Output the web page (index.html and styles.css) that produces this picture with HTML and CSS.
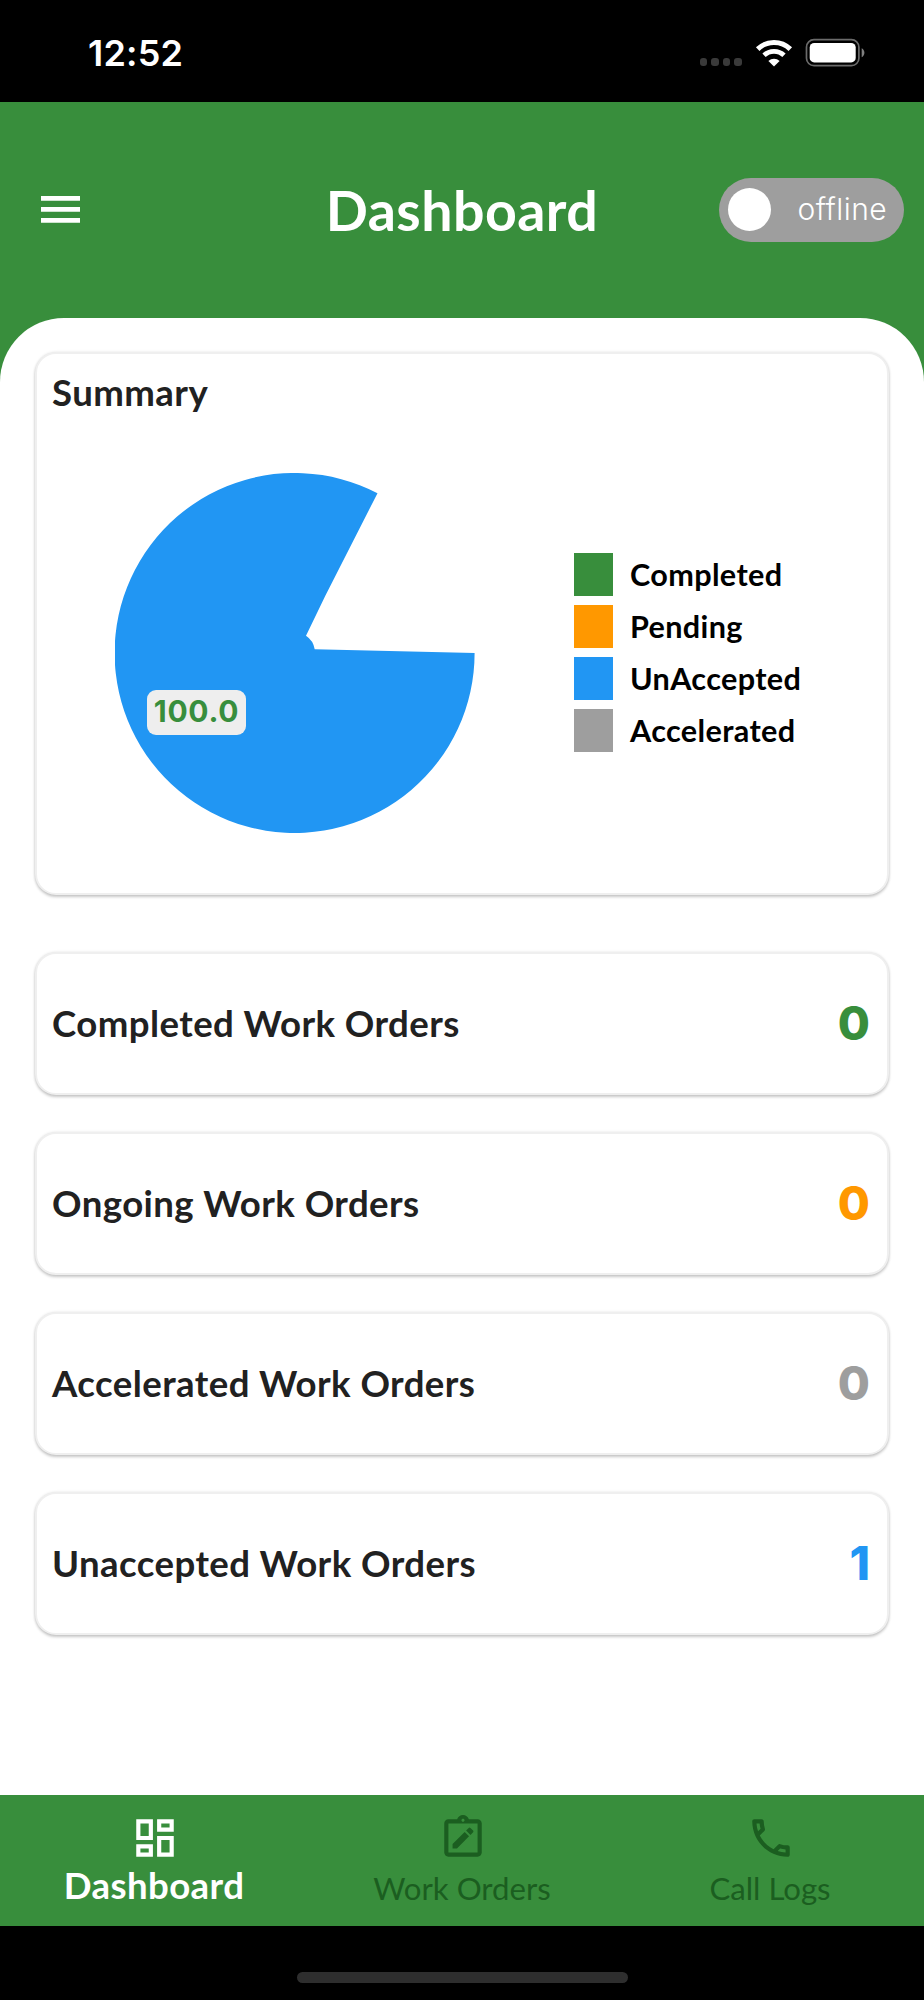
FILE: index.html
```html
<!DOCTYPE html>
<html lang="en">
<head>
<meta charset="utf-8">
<title>Dashboard</title>
<link rel="stylesheet" href="styles.css">
</head>
<body>
<div class="screen">
  <div class="status">
    <span class="clock">12:52</span>
    <div class="status-icons">
      <div class="dots"><i></i><i></i><i></i><i></i></div>
      <svg class="wifi" width="38" height="30" viewBox="0 0 38 30">
        <g fill="none" stroke="#fff" stroke-width="5">
          <path d="M2.7 11.1a23.3 23.3 0 0 1 32.6 0"/>
          <path d="M9 17.3a14.5 14.5 0 0 1 20 0" stroke-width="4.8"/>
        </g>
        <path d="M19 28.6l-5.600-5.600a8.200 8.200 0 0 1 11.200 0z" fill="#fff"/>
      </svg>
      <svg class="battery" width="60" height="30" viewBox="0 0 60 30">
        <rect x="1.5" y="1.7" width="52.4" height="26" rx="7.5" fill="none" stroke="#6b6b6b" stroke-width="1.7"/>
        <rect x="4.7" y="5" width="46" height="19.4" rx="4.5" fill="#fff"/>
        <path d="M56.7 10.2c3.600 1.700 3.600 7.300 0 9z" fill="#808080"/>
      </svg>
    </div>
  </div>

  <header class="header">
    <svg class="menu" width="39" height="27" viewBox="0 0 39 27"><path fill="#fff" d="M0 0h39v4.700H0zM0 11h39v4.700H0zM0 22h39v4.700H0z"/></svg>
    <h1 class="title">Dashboard</h1>
    <div class="toggle"><span class="knob"></span><span class="toggle-text">offline</span></div>
  </header>

  <main class="sheet">
    <section class="card summary">
      <h2 class="label">Summary</h2>
      <div class="chart-row">
        <div class="pie">
          <svg width="360" height="360" viewBox="0 0 360 360">
            <path fill="#2196f3" d="M262.500 20.200A180 180 0 1 0 359.600 180L199.700 176.300A20 20 0 0 0 191 162.700L210.200 123Z"/>
          </svg>
          <span class="badge">100.0</span>
        </div>
        <ul class="legend">
          <li><span class="swatch green"></span>Completed</li>
          <li><span class="swatch orange"></span>Pending</li>
          <li><span class="swatch blue"></span>UnAccepted</li>
          <li><span class="swatch grey"></span>Accelerated</li>
        </ul>
      </div>
    </section>
    <section class="card stat"><h2 class="label">Completed Work Orders</h2><span class="count c-green">0</span></section>
    <section class="card stat"><h2 class="label">Ongoing Work Orders</h2><span class="count c-orange">0</span></section>
    <section class="card stat"><h2 class="label">Accelerated Work Orders</h2><span class="count c-grey">0</span></section>
    <section class="card stat"><h2 class="label">Unaccepted Work Orders</h2><span class="count c-blue">1</span></section>
  </main>

  <nav class="tabs">
    <div class="tab active">
      <svg width="50" height="50" viewBox="0 0 24 24" fill="currentColor"><path d="M19 5v2h-4V5h4M9 5v6H5V5h4m10 8v6h-4v-6h4M9 17v2H5v-2h4M21 3h-8v6h8V3zM11 3H3v10h8V3zm10 8h-8v10h8V11zm-10 4H3v6h8v-6z"/></svg>
      <span>Dashboard</span>
    </div>
    <div class="tab">
      <svg width="50" height="50" viewBox="0 0 24 24" fill="currentColor"><path fill-rule="evenodd" d="M19 3h-4.180C14.400 1.840 13.300 1 12 1s-2.400.84-2.820 2H5c-1.100 0-2 .9-2 2v14c0 1.100.9 2 2 2h14c1.100 0 2-.9 2-2V5c0-1.100-.9-2-2-2zm-7-.25c.41 0 .75.34.75.75s-.34.75-.75.75-.75-.34-.75-.75.34-.75.75-.75zM19 19H5V5h14v14z"/><path d="M7 14.900V17h2.100l5.800-5.800-2.100-2.100zM15.600 10.500l1.250-1.250a.6.6 0 0 0 0-.8L15.550 7.150a.6.6 0 0 0-.8 0L13.500 8.400z"/></svg>
      <span>Work Orders</span>
    </div>
    <div class="tab">
      <svg width="50" height="50" viewBox="0 0 24 24" fill="currentColor"><path d="M6.540 5c.06.89.21 1.760.45 2.590l-1.200 1.200c-.41-1.200-.67-2.470-.76-3.790h1.510m9.860 12.020c.85.24 1.720.39 2.600.45v1.490c-1.320-.09-2.590-.35-3.800-.75l1.200-1.190M7.500 3H4c-.55 0-1 .45-1 1 0 9.390 7.610 17 17 17 .55 0 1-.45 1-1v-3.490c0-.55-.45-1-1-1-1.240 0-2.450-.2-3.570-.57-.1-.04-.21-.05-.31-.05-.26 0-.51.1-.71.29l-2.200 2.200c-2.830-1.450-5.150-3.760-6.590-6.590l2.200-2.200c.28-.28.36-.67.25-1.020C8.700 6.450 8.500 5.250 8.500 4c0-.55-.45-1-1-1z"/></svg>
      <span>Call Logs</span>
    </div>
  </nav>
  <footer class="home"><span class="home-bar"></span></footer>
</div>
</body>
</html>
```
FILE: styles.css
```css
* { box-sizing: border-box; margin: 0; padding: 0; }
body { background: #000; font-family: Lato, "Liberation Sans", sans-serif; }
.screen { width: 924px; height: 2000px; display: flex; flex-direction: column; background: #388e3c; overflow: hidden; }

.status { height: 101.500px; flex: none; background: #000; display: flex; align-items: center; justify-content: space-between; padding: 4px 59px 0 88px; color: #fff; }
.clock { font: 600 36px/44px Inter, sans-serif; letter-spacing: 0.200px; }
.status-icons { display: flex; align-items: center; }
.dots { display: flex; gap: 4px; margin: 18px 13px 0 0; }
.dots i { width: 7.600px; height: 7.600px; border-radius: 3px; background: #3a3a3a; }
.wifi { margin-right: 12px; }

.header { height: 216px; flex: none; display: grid; grid-template-columns: 179px 1fr 200px; align-items: center; padding: 0 20px 0 41px; }
.title { color: #fff; font-size: 55.500px; font-weight: 700; text-align: center; line-height: 66px; letter-spacing: 0.450px; }
.menu { display: block; }
.toggle { justify-self: end; width: 185px; height: 64px; border-radius: 32px; background: #9e9e9e; display: flex; align-items: center; justify-content: space-between; padding: 0 17px 0 9px; }
.knob { width: 43px; height: 43px; border-radius: 50%; background: #fff; }
.toggle-text { color: #fff; font: 350 30px/36px Inter, sans-serif; letter-spacing: 0.400px; margin-top: -2px; }

.sheet { flex: 1; background: #fff; border-radius: 64px 64px 0 0; padding: 34px 35px 0; display: flex; flex-direction: column; }
.card { background: #fff; border: 2px solid #efefef; border-radius: 21px; box-shadow: 0 2px 3px rgba(0,0,0,.2), 0 0 3px rgba(0,0,0,.1); }
.label { color: #212121; font-size: 36.600px; font-weight: 700; line-height: 44px; letter-spacing: 0.430px; }
.summary { height: 543px; margin-bottom: 57px; padding: 16px 15px; }
.chart-row { display: flex; align-items: center; padding: 59px 0 0 63px; }
.pie { position: relative; width: 360px; height: 360px; flex: none; }
.pie svg { display: block; }
.badge { position: absolute; left: 32px; top: 217px; width: 99px; height: 45px; border-radius: 9px; background: #eee; color: #388e3c; font: 650 30px/43px Inter, sans-serif; letter-spacing: 0.700px; text-align: center; }
.legend { list-style: none; margin-left: 99px; display: flex; flex-direction: column; gap: 9px; }
.legend li { display: flex; align-items: center; height: 43px; color: #000; font-size: 30.600px; font-weight: 700; letter-spacing: 0.350px; }
.swatch { width: 39px; height: 43px; margin-right: 17px; }
.green { background: #388e3c; }
.orange { background: #ff9800; }
.blue { background: #2196f3; }
.grey { background: #9e9e9e; }
.stat { height: 143px; margin-bottom: 37px; display: flex; align-items: center; justify-content: space-between; padding: 0 17px 0 15px; }
.count { font: 800 46.500px/60px Inter, sans-serif; margin-top: -1px; }
.c-green { color: #388e3c; }
.c-orange { color: #ff9800; }
.c-grey { color: #9e9e9e; }
.c-blue { color: #2196f3; }

.tabs { height: 131px; flex: none; display: grid; grid-template-columns: repeat(3, 1fr); color: #1b5e20; font-size: 31.200px; }
.tab { display: flex; flex-direction: column; align-items: center; padding-top: 18px; }
.tab svg { margin-left: 1.500px; }
.tab span { line-height: 40px; margin-top: 5px; }
.tab.active { color: #fff; font-size: 36.600px; font-weight: 700; }
.tab.active span { margin-top: 2px; letter-spacing: 0.430px; }
.home { height: 74px; flex: none; background: #000; display: flex; justify-content: center; padding-top: 45.500px; }
.home-bar { width: 331px; height: 11px; border-radius: 6px; background: #2e2e2e; }
```
